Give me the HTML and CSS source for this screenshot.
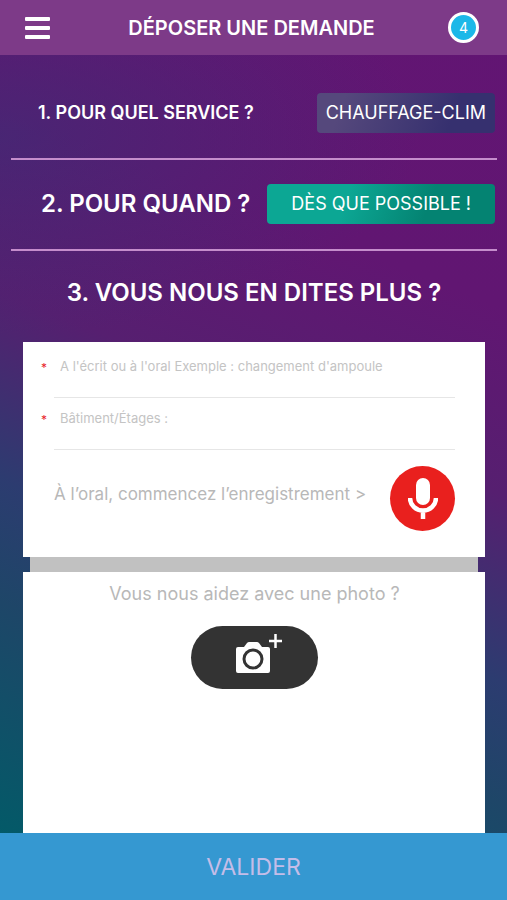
FILE: index.html
```html
<!DOCTYPE html>
<html lang="fr">
<head>
<meta charset="utf-8">
<meta name="viewport" content="width=device-width, initial-scale=1">
<title>Déposer une demande</title>
<link rel="stylesheet" href="styles.css">
</head>
<body>
<header class="topbar">
  <button class="menu" type="button" aria-label="Menu">
    <svg width="26" height="22" viewBox="0 0 26 22" fill="#fff"><rect x="1" y="0" width="25" height="4" rx="1"/><rect x="1" y="9" width="25" height="4" rx="1"/><rect x="1" y="18" width="25" height="4" rx="1"/></svg>
  </button>
  <h1 class="title">DÉPOSER UNE DEMANDE</h1>
  <a class="badge" href="#">4</a>
</header>
<form class="request">
  <main class="steps">
    <section class="step">
      <h2 class="label label-small">1. POUR QUEL SERVICE ?</h2>
      <button class="choice choice-service" type="button">CHAUFFAGE-CLIM</button>
    </section>
    <section class="step">
      <h2 class="label">2. POUR QUAND ?</h2>
      <button class="choice choice-time" type="button">DÈS QUE POSSIBLE !</button>
    </section>
    <h2 class="label label-details">3. VOUS NOUS EN DITES PLUS ?</h2>
    <section class="card">
      <div class="field field-first">
        <label class="required" for="details">*</label>
        <input class="input" id="details" type="text" placeholder="A l'écrit ou à l'oral Exemple : changement d'ampoule">
      </div>
      <div class="field">
        <label class="required" for="place">*</label>
        <input class="input" id="place" type="text" placeholder="Bâtiment/Étages :">
      </div>
      <div class="voice">
        <p class="hint">À l’oral, commencez l’enregistrement &gt;</p>
        <button class="record" type="button" aria-label="Enregistrer">
          <svg width="30" height="42" viewBox="0 0 30 42"><rect x="8" y="0" width="14" height="27" rx="7" fill="#fff"/><path d="M2 20a13 12.500 0 0 0 26 0M15 32v9" fill="none" stroke="#fff" stroke-width="4.500"/></svg>
        </button>
      </div>
    </section>
    <div class="divider"></div>
    <section class="card card-photo">
      <p class="hint hint-photo">Vous nous aidez avec une photo ?</p>
      <button class="photo" type="button" aria-label="Ajouter une photo">
        <svg width="56" height="52" viewBox="-8 0 56 52"><path d="M3 15h6l3-4q1-1 2-1h8q1 0 2 1l3 4h6q2 0 2 2v22q0 2-2 2H3q-2 0-2-2V17q0-2 2-2z" fill="#fff"/><circle cx="18" cy="27" r="9" fill="#fff" stroke="#333" stroke-width="3"/><path d="M40.500 2v14M34 9h13" stroke="#fff" stroke-width="2.500"/></svg>
      </button>
    </section>
  </main>
  <button class="submit" type="submit">VALIDER</button>
</form>
</body>
</html>
```

FILE: styles.css
```css
* {
  box-sizing: border-box;
}

body {
  margin: 0;
  min-height: 100vh;
  display: flex;
  flex-direction: column;
  font-family: Inter, "Liberation Sans", sans-serif;
  color: #fff;
  background:
    radial-gradient(ellipse 420px 200px at 0 135px, rgba(45, 55, 118, 0.45), rgba(45, 55, 118, 0)),
    linear-gradient(202deg, #621573 0%, #611672 28%, #561f70 45%, #2c3c70 62%, #1e4668 73%, #035a68 94%);
}

h1,
h2,
p {
  margin: 0;
}

button {
  font-family: inherit;
  color: inherit;
  border: 0;
  padding: 0;
}

.topbar {
  display: grid;
  grid-template-columns: 1fr auto 1fr;
  align-items: center;
  height: 55px;
  padding: 0 28px 0 24px;
  background: #7d3a88;
}

.menu {
  display: flex;
  justify-self: start;
  background: none;
}

.title {
  font-size: 20px;
  font-weight: 600;
}

.badge {
  justify-self: end;
  display: flex;
  align-items: center;
  justify-content: center;
  width: 31px;
  height: 31px;
  border: 3px solid #fff;
  border-radius: 50%;
  background: #1cb8e8;
  color: #fff;
  font-size: 14px;
  text-decoration: none;
}

.request,
.steps {
  flex: 1;
  display: flex;
  flex-direction: column;
}

.steps {
  padding: 14px 10px 0 11px;
}

.step {
  display: flex;
  align-items: center;
  justify-content: space-between;
  height: 91px;
  padding: 0 2px 2px 27px;
  border-bottom: 2px solid #c58dcc;
}

.label {
  flex: 1;
  font-size: 24px;
  font-weight: 600;
  padding-left: 3px;
}

.label-small {
  font-size: 18px;
  padding-left: 0;
}

.label-details {
  flex: none;
  padding: 28px 0 35px;
  line-height: 28px;
  text-align: center;
}

.choice {
  height: 40px;
  border-radius: 4px;
  font-size: 18px;
}

.choice-service {
  padding: 0 9px;
  background: linear-gradient(110deg, #55487c 15%, #36306f 75%);
}

.choice-time {
  padding: 0 24px;
  background: linear-gradient(110deg, #0ca794 35%, #048372 70%);
}

.card {
  margin: 0 12px;
  padding: 0 30px 0 31px;
  background: #fff;
  color: #b8b8b8;
}

.field {
  display: flex;
  height: 52px;
  padding-top: 10px;
  border-bottom: 1px solid #e6e6e6;
}

.field-first {
  height: 56px;
  padding-top: 14px;
}

.required {
  width: 0;
  padding-top: 4px;
  text-indent: -13px;
  line-height: 16px;
  font-size: 12px;
  color: #e8252b;
}

.input {
  flex: 1;
  min-width: 0;
  height: 20px;
  padding: 0 6px;
  border: 0;
  background: none;
  font-family: inherit;
  font-size: 13px;
  color: #444;
}

.input::placeholder {
  color: #c4c4c4;
}

.voice {
  display: flex;
  align-items: flex-start;
  justify-content: space-between;
  height: 107px;
  padding-top: 16px;
}

.voice .hint {
  padding-top: 16px;
}

.hint {
  font-size: 17px;
  line-height: 24px;
}

.hint-photo {
  font-size: 18px;
}

.record {
  display: flex;
  align-items: center;
  justify-content: center;
  width: 65px;
  height: 65px;
  border-radius: 50%;
  background: #e9201e;
}

.divider {
  height: 15px;
  margin: 0 19px;
  background: #c1c1c1;
}

.card-photo {
  flex: 1;
  display: flex;
  flex-direction: column;
  align-items: center;
  gap: 20px;
  padding-top: 10px;
}

.photo {
  display: flex;
  align-items: center;
  justify-content: center;
  width: 127px;
  height: 63px;
  border-radius: 32px;
  background: #333;
}

.submit {
  height: 67px;
  background: #3598d1;
  color: #c4bde8;
  font-size: 23px;
}
```
